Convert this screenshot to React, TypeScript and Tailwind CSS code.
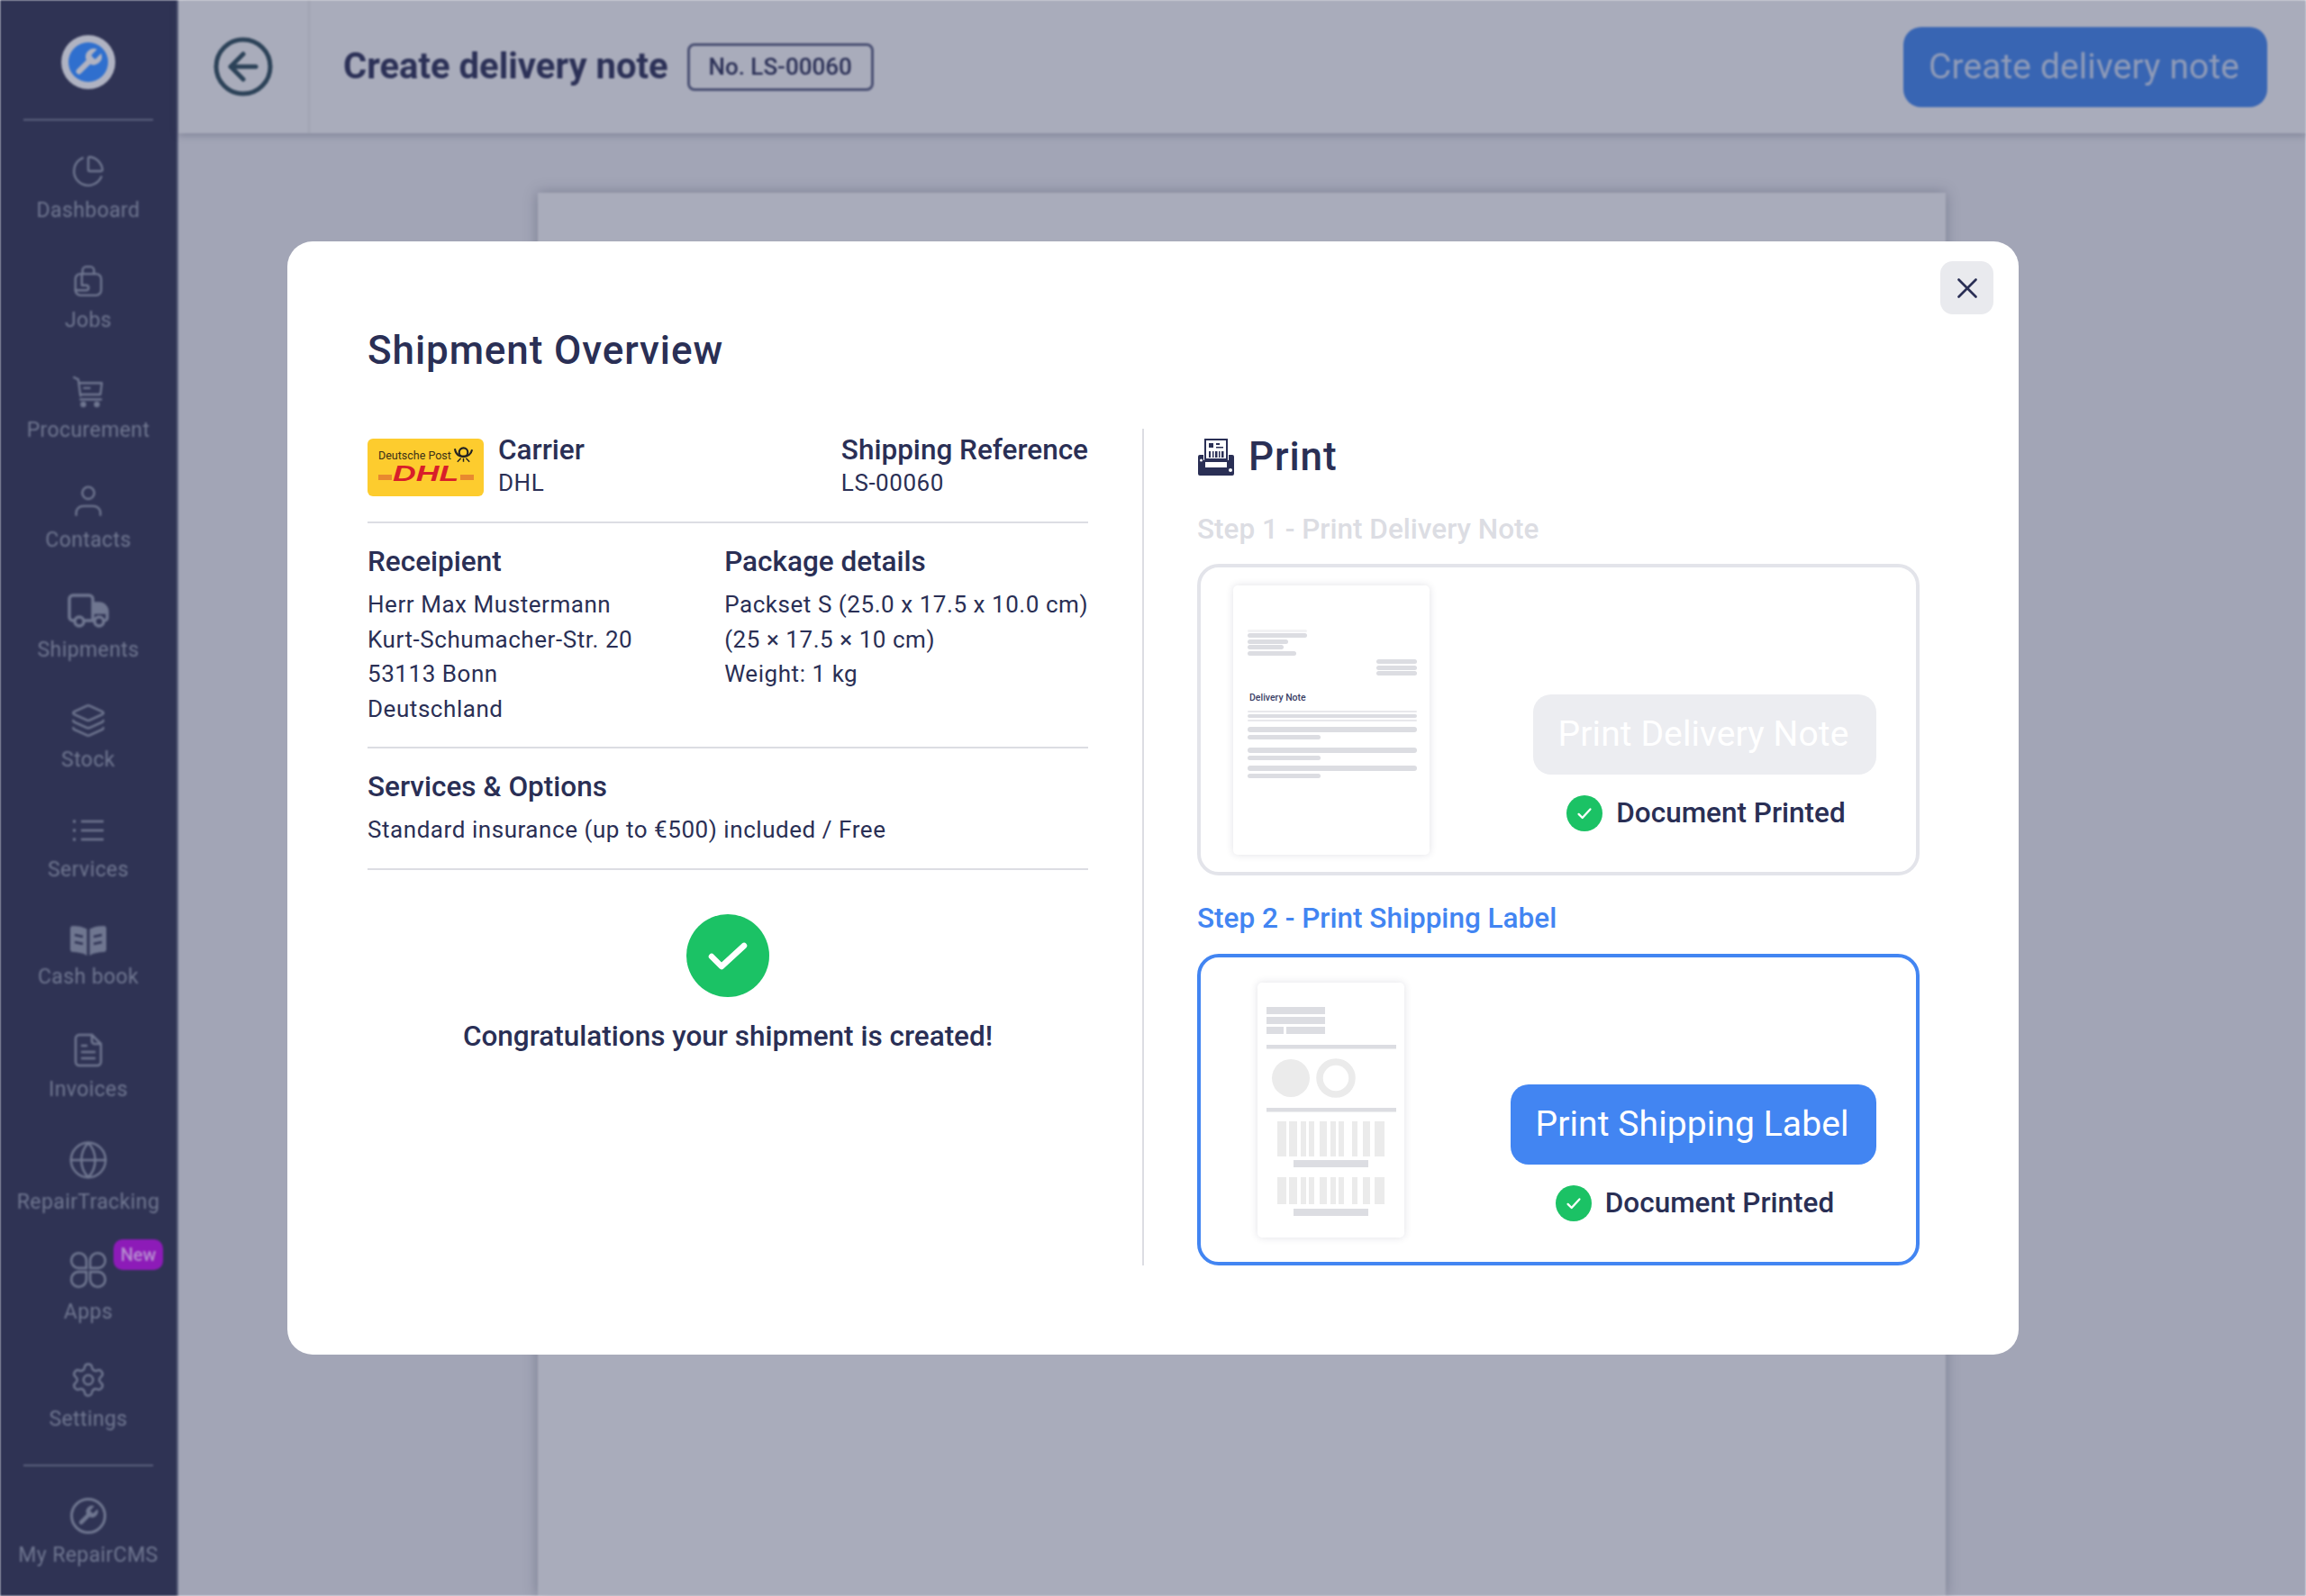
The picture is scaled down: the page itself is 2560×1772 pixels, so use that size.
import React from "react";
import { ChartPie, Globe, Layers, Settings, X } from "lucide-react";

const WRENCH =
  "M14.7 6.3a1 1 0 0 0 0 1.4l1.6 1.6a1 1 0 0 0 1.4 0l3.77-3.77a6 6 0 0 1-7.94 7.94l-6.91 6.91a2.12 2.12 0 0 1-3-3l6.91-6.91a6 6 0 0 1 7.94-7.94l-3.76 3.76z";

const stroke = "#6f7690";

const Line: React.FC<{ size?: number; children: React.ReactNode }> = ({ size = 38, children }) => (
  <svg width={size} height={size} viewBox="0 0 24 24" fill="none" stroke={stroke} strokeWidth={1.5} strokeLinecap="round" strokeLinejoin="round">
    {children}
  </svg>
);

const navItems: { label: string; icon: React.ReactNode; badge?: boolean; labelClass?: string }[] = [
  { label: "Dashboard", icon: <ChartPie size={38} color={stroke} strokeWidth={1.5} className="-scale-x-100 rotate-90" /> },
  {
    label: "Jobs",
    icon: (
      <Line>
        <rect x="3" y="7" width="18" height="15" rx="3.5" />
        <path d="M8 7V4.5A2.5 2.5 0 0 1 10.5 2h3A2.5 2.5 0 0 1 16 4.5V7" />
        <path d="M7.5 7v7.5M3 18.5h7.5a1.7 1.7 0 0 0 0-3.5H7.5" />
      </Line>
    ),
  },
  {
    label: "Procurement",
    icon: (
      <Line>
        <path d="M2 2.5l3 1.5 1.5 11.5M5.3 6.5H21.5l-1 8H6.5M6.5 18h14.5" />
        <path d="M9 10h4" />
        <circle cx="8.5" cy="21.5" r="1.3" fill={stroke} />
        <circle cx="18" cy="21.5" r="1.3" fill={stroke} />
      </Line>
    ),
  },
  {
    label: "Contacts",
    icon: (
      <Line>
        <circle cx="12" cy="6.5" r="4.2" />
        <path d="M3.5 22v-1.5c0-3 2.4-4.8 5-4.8h7c2.6 0 5 1.8 5 4.8V22" />
      </Line>
    ),
  },
  {
    label: "Shipments",
    icon: (
      <svg width="46" height="38" viewBox="0 0 46 38" fill="none" stroke={stroke} strokeWidth={3.5}>
        <path d="M9 30H6a4 4 0 0 1-4-4V6a4 4 0 0 1 4-4h18a4 4 0 0 1 4 4v24H17" />
        <path d="M28 11h7a9 9 0 0 1 9 9v7a3 3 0 0 1-3 3h-2M28 30h3" />
        <path d="M30 13h5a7 7 0 0 1 6 5v3H30z" fill={stroke} />
        <circle cx="13" cy="31" r="5" />
        <circle cx="35" cy="31" r="5" />
      </svg>
    ),
  },
  { label: "Stock", icon: <Layers size={40} color={stroke} strokeWidth={1.5} /> },
  {
    label: "Services",
    icon: (
      <svg width="36" height="26" viewBox="0 0 36 26" fill="none" stroke={stroke} strokeWidth={2.5}>
        <path d="M10 3h25M10 13h25M10 23h25" />
        <path d="M1 3h3M1 13h3M1 23h3" strokeWidth={3} />
      </svg>
    ),
  },
  {
    label: "Cash book",
    labelClass: "mt-[5px]",
    icon: (
      <svg width="42" height="36" viewBox="0 0 42 36" fill={stroke}>
        <path d="M1 5a3 3 0 0 1 3-3c6 0 11 1 15.500 3.500V35C15 32 9 31 4 31a3 3 0 0 1-3-3z" />
        <path d="M41 5a3 3 0 0 0-3-3c-6 0-11 1-15.500 3.500V35C27 32 33 31 38 31a3 3 0 0 0 3-3z" />
        <path d="M6 12l9 2M6 20l9 2M36 12l-9 2M36 20l-9 2" stroke="#2f3354" strokeWidth={2.500} />
      </svg>
    ),
  },
  {
    label: "Invoices",
    icon: (
      <svg width="32" height="38" viewBox="0 0 32 38" fill="none" stroke={stroke} strokeWidth={2.5} strokeLinecap="round" strokeLinejoin="round">
        <path d="M20 2H6a4 4 0 0 0-4 4v26a4 4 0 0 0 4 4h20a4 4 0 0 0 4-4V12z" />
        <path d="M20 2v7a3 3 0 0 0 3 3h7M9 14h5M9 21h14M9 28h14" />
      </svg>
    ),
  },
  { label: "RepairTracking", labelClass: "mt-[11px]", icon: <Globe size={46} color={stroke} strokeWidth={1.3} /> },
  {
    label: "Apps",
    badge: true,
    labelClass: "mt-[11px]",
    icon: (
      <svg width="44" height="44" viewBox="0 0 42 42" fill="none" stroke={stroke} strokeWidth={2.5}>
        <path d="M19 19h-9a8 8 0 1 1 9-8zM23 19h9a8 8 0 1 0-9-8zM19 23h-9a8 8 0 1 0 9 8zM23 23h9a8 8 0 1 1-9 8z" />
      </svg>
    ),
  },
  { label: "Settings", icon: <Settings size={42} color={stroke} strokeWidth={1.4} /> },
];

const Sidebar = () => (
  <aside className="w-[198px] shrink-0 h-full bg-[#2f3354] flex flex-col items-center border-r-2 border-[#5a5f7c]">
    <div className="mt-[39px] w-[60px] h-[60px] rounded-full bg-[#b0b3c2] flex items-center justify-center">
      <div className="w-[44px] h-[44px] rounded-full bg-[#2f6fce] flex items-center justify-center">
        <svg width="36" height="36" viewBox="0 0 24 24" fill="#b0b3c2">
          <path d={WRENCH} />
        </svg>
      </div>
    </div>
    <div className="mt-[33px] w-[144px] h-[2px] bg-[#5a5f7c]" />
    <nav className="mt-[34px] flex flex-col gap-4 w-full">
      {navItems.map((item) => (
        <NavItem key={item.label} label={item.label} icon={item.icon} badge={item.badge} labelClass={item.labelClass} />
      ))}
    </nav>
    <div className="mt-[10px] w-[144px] h-[2px] bg-[#5a5f7c]" />
    <div className="mt-[33px] w-full">
      <NavItem
        label="My RepairCMS"
        icon={
          <svg width="42" height="42" viewBox="0 0 42 42" fill="none">
            <circle cx="21" cy="21" r="18.500" stroke={stroke} strokeWidth={3} />
            <g transform="translate(7.500 7.500) scale(1.100)" fill={stroke}>
              <path d={WRENCH} />
            </g>
          </svg>
        }
      />
    </div>
  </aside>
);

const NavItem: React.FC<{ label: string; icon: React.ReactNode; badge?: boolean; labelClass?: string }> = ({ label, icon, badge, labelClass = "mt-2" }) => (
  <div className="relative h-[106px] flex flex-col items-center">
    <div className="h-[44px] flex items-center justify-center">{icon}</div>
    <div className={`${labelClass} text-[23px] leading-[28px] tracking-[0.4px] text-[#6f7690] whitespace-nowrap`}>{label}</div>
    {badge && (
      <span className="absolute left-[126px] -top-[12px] w-[55px] h-[34px] rounded-[10px] bg-[#8d1bb8] text-[#b58ad0] text-[20px] font-medium flex items-center justify-center">
        New
      </span>
    )}
  </div>
);

const Background = () => (
  <div className="absolute inset-0 flex blur-[1px] bg-[#a2a5b6]">
    <Sidebar />
    <div className="flex-1 flex flex-col min-w-0">
      <header className="relative h-[148px] shrink-0 bg-[#a9acbb] shadow-[0_2px_8px_rgba(60,64,90,0.35)] flex items-center">
        <div className="w-[146px] h-full border-r-2 border-[#a0a3b3] flex items-center justify-center">
          <svg width="66" height="66" viewBox="0 0 66 66" fill="none" stroke="#2c4258" strokeWidth={5} strokeLinecap="round" strokeLinejoin="round">
            <circle cx="33" cy="33" r="30" />
            <path d="M33 19L19 33l14 14M19 33h28" />
          </svg>
        </div>
        <div className="ml-[37px] text-[40px] font-bold text-[#2c3157] whitespace-nowrap">Create delivery note</div>
        <div className="ml-[21px] h-[53px] w-[207px] rounded-[8px] border-[3px] border-[#4a5073] flex items-center justify-center text-[26px] font-medium text-[#2c3157]">
          No. LS-00060
        </div>
        <div className="ml-auto mr-[43px] w-[404px] h-[89px] pr-[3px] rounded-[20px] bg-[#3865b3] flex items-center justify-center text-[39px] text-[#8f9bb8] tracking-[0.1px]">
          Create delivery note
        </div>
      </header>
      <main className="flex-1 min-h-0 pt-[66px] pl-[399px]">
        <div className="w-[1563px] h-full bg-[#a9acbb] shadow-[0_0_14px_rgba(60,64,90,0.4)]" />
      </main>
    </div>
  </div>
);

const DhlLogo = () => (
  <div className="relative w-[129px] h-[64px] shrink-0 mt-[5px] rounded-[6px] bg-[#fdcc2e] overflow-hidden">
    <span className="absolute left-[12px] top-[11px] text-[12.5px] leading-[16px] text-[#3a2f17] whitespace-nowrap">
      Deutsche Post
    </span>
    <svg className="absolute left-[95px] top-[9px]" width="23" height="18" viewBox="0 0 24 18" fill="none" stroke="#222" strokeWidth={2.2}>
      <path d="M2 2c1 6 5 9 10 9s9-3 10-8" />
      <circle cx="12" cy="6" r="5" />
      <path d="M5 17l4-4M19 17l-4-4M12 13v4" strokeWidth={1.500} />
    </svg>
    <span className="absolute left-[12px] top-[40px] w-[15px] h-[6px] bg-[#e8892f]" />
    <span className="absolute left-[103px] top-[40px] w-[15px] h-[6px] bg-[#e8892f]" />
    <span className="absolute left-[28px] top-[28px] origin-left scale-x-[1.55] text-[23px] leading-[22px] font-bold italic font-['Liberation_Sans',sans-serif] text-[#d81f2a]">
      DHL
    </span>
  </div>
);

const PrinterIcon = () => (
  <svg width="42" height="42" viewBox="0 0 42 42">
    <path d="M9 2h24v22H9z" fill="#fff" stroke="#2a2f55" strokeWidth={2} />
    <path d="M13 6h5v5h-5zM21 6h4v2h-4zM21 10h8v1.500h-8z" fill="#2a2f55" />
    <path d="M13 15h2v7h-2zM17 15h1.500v7H17zM20 15h2.500v7H20zM24 15h1.500v7H24zM27 15h2.500v7H27z" fill="#2a2f55" />
    <path d="M3 19h4v6h28v-6h4a2 2 0 0 1 2 2v19a2 2 0 0 1-2 2H3a2 2 0 0 1-2-2V21a2 2 0 0 1 2-2z" fill="#2a2f55" />
    <rect x="9" y="27" width="24" height="6" fill="#fff" />
    <circle cx="37" cy="36" r="2" fill="#fff" />
    <circle cx="4.500" cy="25" r="1.500" fill="#fff" />
  </svg>
);

const DeliveryDoc = () => {
  const bars: [number, number, number, number, string][] = [
    [16, 49, 66, 3, "#f2f2f4"],
    [16, 53, 66, 5, "#dcdde2"],
    [16, 60, 45, 5, "#dcdde2"],
    [16, 66, 40, 5, "#dcdde2"],
    [16, 73, 54, 5, "#dcdde2"],
    [159, 82, 45, 5, "#dcdde2"],
    [159, 89, 45, 5, "#dcdde2"],
    [159, 95, 45, 5, "#dcdde2"],
    [16, 139, 188, 2, "#e8e8ec"],
    [16, 143, 188, 4, "#dcdde2"],
    [16, 149, 188, 2, "#e8e8ec"],
    [16, 157, 188, 6, "#dcdde2"],
    [16, 166, 81, 5, "#dcdde2"],
    [16, 180, 188, 6, "#dcdde2"],
    [16, 189, 81, 5, "#dcdde2"],
    [16, 200, 188, 6, "#dcdde2"],
    [16, 209, 81, 5, "#dcdde2"],
  ];
  return (
    <div className="w-[218px] h-[299px] shrink-0 rounded-[5px] bg-white shadow-[0_0_8px_rgba(40,45,80,0.14)]">
      <svg width="218" height="299" viewBox="0 0 218 299">
        {bars.map(([x, y, w, h, c], i) => (
          <rect key={i} x={x} y={y} width={w} height={h} rx={h / 2} fill={c} />
        ))}
        <text x="18" y="127.500" fontSize="10.500" fontWeight="500" fill="#3b4066" fontFamily="Roboto, sans-serif">
          Delivery Note
        </text>
      </svg>
    </div>
  );
};

const LabelDoc = () => {
  const grey: [number, number, number, number][] = [
    [10, 27, 65, 8],
    [10, 38, 65, 8],
    [10, 49, 19, 8],
    [32, 49, 43, 8],
    [10, 69, 144, 4.500],
    [10, 139, 144, 4.500],
    [40, 197, 83, 8],
    [40, 251, 83, 8],
  ];
  const barX: [number, number][] = [
    [22, 10], [35, 9], [48, 6], [57, 6], [69, 8], [81, 6], [90, 6], [105, 6], [117, 8], [130, 11],
  ];
  return (
    <div className="w-[163px] h-[283px] shrink-0 rounded-[5px] bg-white shadow-[0_0_8px_rgba(40,45,80,0.14)]">
      <svg width="163" height="283" viewBox="0 0 163 283">
        {grey.map(([x, y, w, h], i) => (
          <rect key={i} x={x} y={y} width={w} height={h} fill="#dcdde2" />
        ))}
        <circle cx="37" cy="106" r="21" fill="#ebebeb" />
        <circle cx="87" cy="106" r="18" fill="none" stroke="#ebebeb" strokeWidth={7.500} />
        {barX.map(([x, w]) => (
          <rect key={x} x={x} y={154} width={w} height={39} fill="#ebebeb" />
        ))}
        {barX.map(([x, w]) => (
          <rect key={x} x={x} y={216} width={w} height={30} fill="#ebebeb" />
        ))}
      </svg>
    </div>
  );
};

const Printed = () => (
  <div className="mt-[23px] ml-[3px] h-[40px] flex items-center gap-[15px]">
    <div className="w-[40px] h-[40px] rounded-full bg-[#1bc265] flex items-center justify-center">
      <svg width="22" height="22" viewBox="0 0 24 24" fill="none" stroke="#fff" strokeWidth={2.5} strokeLinecap="round" strokeLinejoin="round">
        <path d="M5 13l4.500 4.500L19 7" />
      </svg>
    </div>
    <span className="text-[31.5px] font-medium text-[#2a2f55]">Document Printed</span>
  </div>
);

const Modal = () => (
  <div className="relative w-[1922px] h-[1236px] bg-white rounded-[28px] pl-[89px] pt-[96px] text-[#2a2f55]">
    <button className="absolute top-[22px] right-[28px] w-[59px] h-[59px] rounded-[14px] bg-[#e9eaee] flex items-center justify-center">
      <X size={38} color="#2a2f55" strokeWidth={1.7} />
    </button>
    <h2 className="text-[44px] leading-[50px] font-medium tracking-[0.9px]">Shipment Overview</h2>
    <div className="mt-[62px] flex">
      <div className="w-[862px] h-[929px] pr-[60px] border-r-2 border-[#dcdde3]">
        <div className="pt-[6px] pb-[25px] border-b-2 border-[#dcdde3] flex">
          <DhlLogo />
          <div className="ml-[16px]">
            <div className="text-[31.5px] leading-[36px] font-medium">Carrier</div>
            <div className="text-[26px] leading-[36px] tracking-[0.55px]">DHL</div>
          </div>
          <div className="ml-auto">
            <div className="text-[31.5px] leading-[36px] font-medium">Shipping Reference</div>
            <div className="text-[26px] leading-[36px] tracking-[0.55px]">LS-00060</div>
          </div>
        </div>
        <div className="mt-[25px] pb-[23px] border-b-2 border-[#dcdde3] flex">
          <div className="w-[397px]">
            <div className="text-[31.5px] leading-[36px] font-medium">Receipient</div>
            <div className="mt-[10px] text-[26px] leading-[38.500px] tracking-[0.55px]">
              <div>Herr Max Mustermann</div>
              <div>Kurt-Schumacher-Str. 20</div>
              <div>53113 Bonn</div>
              <div>Deutschland</div>
            </div>
          </div>
          <div>
            <div className="text-[31.5px] leading-[36px] font-medium">Package details</div>
            <div className="mt-[10px] text-[26px] leading-[38.500px] tracking-[0.55px] whitespace-nowrap">
              <div>Packset S (25.0 x 17.5 x 10.0 cm)</div>
              <div>(25 × 17.5 × 10 cm)</div>
              <div>Weight: 1 kg</div>
            </div>
          </div>
        </div>
        <div className="mt-[25px] pb-[24px] border-b-2 border-[#dcdde3]">
          <div className="text-[31.5px] leading-[36px] font-medium">Services &amp; Options</div>
          <div className="mt-[10px] text-[26px] leading-[38px] tracking-[0.55px]">Standard insurance (up to €500) included / Free</div>
        </div>
        <div className="mt-[49px] flex flex-col items-center">
          <div className="w-[92px] h-[92px] rounded-full bg-[#1bc265] flex items-center justify-center">
            <svg width="48" height="48" viewBox="0 0 48 48" fill="none" stroke="#fff" strokeWidth={6.500} strokeLinecap="round" strokeLinejoin="round">
              <path d="M6 25l11 11L42 13" />
            </svg>
          </div>
          <div className="mt-[24px] text-[31.5px] leading-[40px] font-medium">Congratulations your shipment is created!</div>
        </div>
      </div>
      <div className="pl-[59px] w-[861px]">
        <div className="h-[62px] flex items-center gap-[15px]">
          <PrinterIcon />
          <span className="text-[44px] font-medium tracking-[0.9px]">Print</span>
        </div>
        <div className="mt-[30px] text-[31.5px] leading-[40px] font-medium text-[#dcdde3]">Step 1 - Print Delivery Note</div>
        <div className="mt-[18px] w-[802px] h-[346px] rounded-[24px] border-4 border-[#e3e4ea] pl-[36px] pt-[20px] pr-[44px] flex">
          <DeliveryDoc />
          <div className="ml-auto pt-[121px] flex flex-col items-center">
            <div className="w-[381px] h-[89px] pr-[3px] rounded-[20px] bg-[#ecedf1] flex items-center justify-center text-[39px] text-white tracking-[0.1px]">
              Print Delivery Note
            </div>
            <Printed />
          </div>
        </div>
        <div className="mt-[28px] text-[31.5px] leading-[40px] font-medium text-[#4285f2]">Step 2 - Print Shipping Label</div>
        <div className="mt-[19px] w-[802px] h-[346px] rounded-[24px] border-4 border-[#4285f2] pl-[63px] pt-[28px] pr-[44px] flex">
          <LabelDoc />
          <div className="ml-auto pt-[113px] flex flex-col items-center">
            <div className="w-[406px] h-[89px] pr-[3px] rounded-[20px] bg-[#4285f2] flex items-center justify-center text-[39px] text-white tracking-[0.1px]">
              Print Shipping Label
            </div>
            <Printed />
          </div>
        </div>
      </div>
    </div>
  </div>
);

export default function App() {
  return (
    <div className="relative w-[2560px] h-[1772px] overflow-hidden font-['Roboto',sans-serif]">
      <Background />
      <div className="absolute inset-0 flex items-center justify-center">
        <Modal />
      </div>
    </div>
  );
}
